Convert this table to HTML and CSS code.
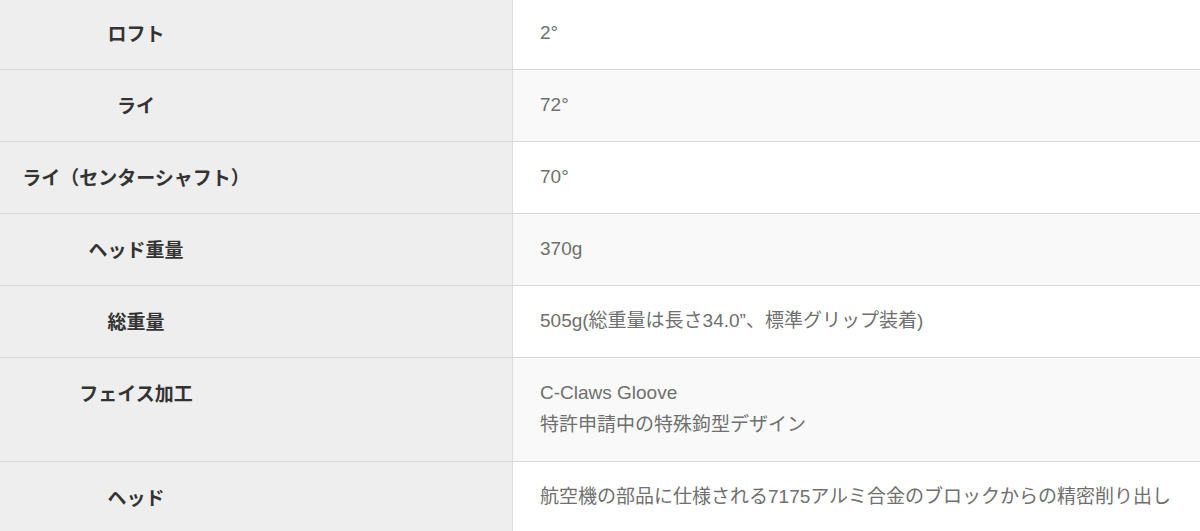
FILE: index.html
```html
<!DOCTYPE html>
<html lang="ja">
<head>
<meta charset="utf-8">
<link rel="stylesheet" href="styles.css">
</head>
<body>
<table class="spec">
  <tbody>
    <tr><th>ロフト</th><td>2°</td></tr>
    <tr class="alt"><th>ライ</th><td>72°</td></tr>
    <tr><th>ライ（センターシャフト）</th><td>70°</td></tr>
    <tr class="alt"><th>ヘッド重量</th><td>370g</td></tr>
    <tr><th>総重量</th><td>505g(総重量は長さ34.0”、標準グリップ装着)</td></tr>
    <tr class="alt"><th>フェイス加工</th><td>C-Claws Gloove<br>特許申請中の特殊鉤型デザイン</td></tr>
    <tr><th>ヘッド</th><td>航空機の部品に仕様される7175アルミ合金のブロックからの精密削り出し</td></tr>
  </tbody>
</table>
</body>
</html>
```

FILE: styles.css
```css
html, body {
  margin: 0;
  padding: 0;
  background: #ffffff;
}
.spec {
  width: 1200px;
  border-collapse: collapse;
  margin-top: -2px;
  table-layout: fixed;
}
.spec th,
.spec td {
  border-bottom: 1px solid #d9d9d9;
  vertical-align: top;
  padding: 19px 0 20px;
  line-height: 32px;
}
.spec th {
  width: 272px;
  padding-right: 240px;
  background: #eeeeee;
  border-right: 1px solid #dcdcdc;
  color: #333333;
  font-family: "Noto Sans CJK JP", sans-serif;
  font-weight: 700;
  font-size: 19px;
  text-align: center;
}
.spec td {
  padding-left: 27px;
  background: #ffffff;
  color: #6f6f6f;
  font-family: "Liberation Sans", "Noto Sans CJK JP", sans-serif;
  font-size: 19px;
  text-align: left;
}
.spec .alt td {
  background: #f9f9f9;
}
```
